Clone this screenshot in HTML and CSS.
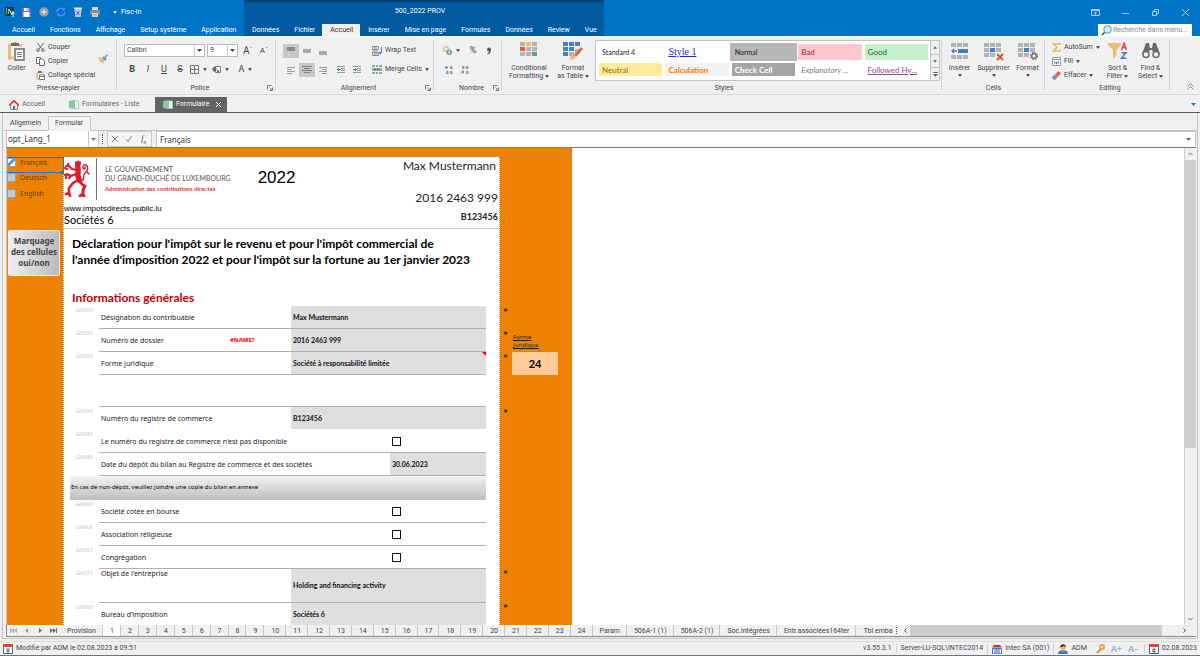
FILE: index.html
```html
<!DOCTYPE html>
<html lang="fr">
<head>
<meta charset="utf-8">
<title>500_2022 PROV - Fisc-in</title>
<link rel="stylesheet" href="styles.css">
</head>
<body>
<svg class="sprite" aria-hidden="true">
  <symbol id="tri" viewBox="0 0 5 3"><path d="M0 0h5L2.500 3z"/></symbol>
  <symbol id="cal" viewBox="0 0 10 10"><path d="M.5 1.500h9v8h-9z" fill="#fff" stroke="#4c5a78"/><path d="M0 0h10v3H0z" fill="#e2403c"/><path d="M4 5h2v3H4z" fill="none" stroke="#333" stroke-width=".8"/></symbol>
  <symbol id="sheet" viewBox="0 0 10 9"><path d="M4 1h5.500v7.500H4z" fill="#f4faf5" stroke="#a9cdb4"/><path d="M0 1l6-1v9L0 8z" fill="#8ec4a0"/></symbol>
  <symbol id="launch" viewBox="0 0 6 6"><path d="M.5 4.500v-4h4M2.500 2.500l2.500 2.500M5.500 2.500v3h-3" fill="none" stroke="#777"/></symbol>
</svg>
<div class="app">
<header class="top">
  <div class="top-left">
    <div class="quick">
      <button aria-label="Application"><svg width="10" height="10" viewBox="0 0 10 10"><path d="M0 0h9v9H0z" fill="#21384f"/><path d="M1.500 1v6M3.500 2v5" stroke="#5fbf6a"/><path d="M4 2l3 6M8 4v6M6.500 6h3" stroke="#fff"/></svg></button>
      <button aria-label="Enregistrer"><svg width="9" height="9" viewBox="0 0 9 9"><path d="M0 0h7.500L9 1.500V9H0z" fill="#8a5fc0"/><path d="M2 0h4.500v3H2zM1.500 4h6v5h-6z" fill="#fff"/><path d="M4.500.5h1v2h-1z" fill="#6a5fc0"/></svg></button>
      <button aria-label="Ajouter"><svg width="10" height="10" viewBox="0 0 10 10"><circle cx="5" cy="5" r="4.700" fill="#9a9a9a"/><path d="M5 2.500v5M2.500 5h5" stroke="#ddd" stroke-width="1.400"/></svg></button>
      <button aria-label="Actualiser"><svg width="10" height="10" viewBox="0 0 10 10"><path d="M1 5a4 4 0 0 1 7-2.500M9 5a4 4 0 0 1-7 2.500" fill="none" stroke="#4f8fe8" stroke-width="1.400"/><path d="M8.800.8v2.700H6zM1.200 9.200V6.500H4z" fill="#4f8fe8"/></svg></button>
      <button aria-label="Supprimer"><svg width="8" height="10" viewBox="0 0 8 10"><path d="M.5 2h7l-.7 8H1.200z" fill="#b9c8f0"/><path d="M0 .5h8v1.500H0z" fill="#e8ecfa"/><path d="M2.500 4l3 4M5.500 4l-3 4" stroke="#4a64c8"/></svg></button>
      <button aria-label="Imprimer"><svg width="10" height="10" viewBox="0 0 10 10"><path d="M2 0h6v3H2z" fill="#d8d8d8"/><path d="M0 3h10v4.500H0z" fill="#8b8b8b"/><path d="M2 6h6v4H2z" fill="#e4dcd2"/><path d="M3 7.500h4M3 9h4" stroke="#888" stroke-width=".6"/></svg></button>
      <span class="quick-more"><svg width="4" height="3" fill="#fff"><use href="#tri"/></svg></span>
      <span class="app-name">Fisc-in</span>
    </div>
    <nav class="tabs">
      <button>Accueil</button><button>Fonctions</button><button>Affichage</button><button>Setup système</button><button>Application</button>
    </nav>
  </div>
  <div class="top-mid">
    <h1 class="doc-title">500_2022 PROV</h1>
    <nav class="tabs">
      <button>Données</button><button>Fichier</button><button class="on">Accueil</button><button>Insérer</button><button>Mise en page</button><button>Formules</button><button>Données</button><button>Review</button><button>Vue</button>
    </nav>
  </div>
  <div class="top-right">
    <div class="win">
      <button aria-label="Options du ruban"><svg width="9" height="7" fill="none" stroke="#a9cdec"><path d="M.5.5h8v6h-8zM.5 1.500h8M4.500 6V3M3 4.500L4.500 3 6 4.500"/></svg></button>
      <button aria-label="Réduire"><svg width="7" height="7" stroke="#a9cdec"><path d="M0 4.500h7"/></svg></button>
      <button aria-label="Restaurer"><svg width="7" height="7" fill="none" stroke="#a9cdec"><path d="M.5 2.500h4v4h-4zM2.500 2V.5h4v4H5"/></svg></button>
      <button aria-label="Fermer"><svg width="7" height="7" stroke="#a9cdec"><path d="M0 0l7 7M7 0L0 7"/></svg></button>
    </div>
    <label class="search">
      <svg width="11" height="11" viewBox="0 0 11 11"><path d="M4 7L.8 10.200" stroke="#444" stroke-width="1.500"/><circle cx="6.500" cy="4.500" r="3.800" fill="#cdeafa" stroke="#4d93c4"/></svg>
      <input type="text" aria-label="Recherche" placeholder="Recherche dans menu...">
    </label>
  </div>
</header>

<section class="ribbon">
  <div class="group g-clip">
    <div class="group-body">
      <button class="big"><svg width="17" height="19" viewBox="0 0 17 19"><path d="M1.500 2v14h4M12.500 2v3" fill="none" stroke="#e9bd76" stroke-width="3"/><path d="M3 1h2.500a1.800 1.800 0 0 1 3 0H11v3H3z" fill="#6b6b6b"/><path d="M7 7h9v11H7z" fill="#fff" stroke="#6b6b6b" stroke-width="1.500"/><path d="M9 10.500h5M9 12.500h5M9 14.500h5" stroke="#777"/></svg>Coller</button>
      <div class="stack">
        <button class="item"><svg width="9" height="9" viewBox="0 0 9 9" fill="none" stroke="#6b6b6b"><path d="M1.500 0l4.500 6M7.500 0L3 6"/><circle cx="2" cy="7.200" r="1.300"/><circle cx="7" cy="7.200" r="1.300"/></svg>Couper</button>
        <button class="item"><svg width="9" height="9" viewBox="0 0 9 9" fill="#fff" stroke="#6b6b6b"><path d="M.5.500h4v6h-4z"/><path d="M3.500 2h3l2 2v4.500h-5z"/></svg>Copier</button>
        <button class="item"><svg width="9" height="9" viewBox="0 0 9 9"><path d="M1 1v7h2M6.500 1v2" fill="none" stroke="#e9bd76" stroke-width="1.600"/><path d="M2 0h3.500v2H2z" fill="#6b6b6b"/><path d="M3.500 4h5v4.500h-5z" fill="#fff" stroke="#777"/><path d="M4 5h4v1H4z" fill="#4a90d9"/></svg>Collage spécial</button>
      </div>
      <button class="brush" aria-label="Reproduire la mise en forme"><svg width="10" height="10" viewBox="0 0 10 10"><path d="M0 3l5 1 2 3-3 2.500C2 8 1 6 0 3z" fill="#e9bd76"/><path d="M5 3l3 3" stroke="#4a90d9" stroke-width="2"/><path d="M6.500 4L9.500.5" stroke="#8a8a8a" stroke-width="1.500"/></svg></button>
    </div>
    <h2>Presse-papier</h2>
  </div>

  <div class="group g-font">
    <div class="group-body two">
      <div class="line">
        <span class="combo w-font"><select aria-label="Police"><option>Calibri</option></select><svg width="5" height="3"><use href="#tri"/></svg></span>
        <span class="combo w-size"><select aria-label="Taille"><option>9</option></select><svg width="5" height="3"><use href="#tri"/></svg></span>
        <button class="ic grow">A<sup>ˆ</sup></button><button class="ic shrink">A<sup>ˇ</sup></button>
      </div>
      <div class="line">
        <button class="ic glyph b">B</button><button class="ic glyph i">I</button><button class="ic glyph u">U</button><button class="ic glyph s">S</button>
        <button class="ic drop" aria-label="Bordures"><svg width="9" height="9" fill="none" stroke="#777"><path d="M.5.500h8v8h-8zM4.500.500v8M.5 4.500h8"/></svg><svg class="ar" width="4" height="3"><use href="#tri"/></svg></button>
        <button class="ic drop wide" aria-label="Remplissage"><svg width="9" height="9" viewBox="0 0 9 9"><path d="M3.500 1.500h5v6h-5z" fill="#fff" stroke="#777"/><path d="M0 4l3-3 2 3-3 3z" fill="#6b6b6b"/><path d="M5 5h2v2H5z" fill="#6b6b6b"/></svg><svg class="ar" width="4" height="3"><use href="#tri"/></svg></button>
        <button class="ic drop wide glyph" aria-label="Couleur">A<svg class="ar" width="4" height="3"><use href="#tri"/></svg></button>
      </div>
    </div>
    <h2>Police</h2><svg class="launch" width="6" height="6"><use href="#launch"/></svg>
  </div>

  <div class="group g-align">
    <div class="group-body two">
      <div class="line">
        <button class="ic sel" aria-label="Haut"><svg width="8" height="8"><path d="M0 0h8v4H0z" fill="#8a8a8a"/></svg></button>
        <button class="ic" aria-label="Milieu"><svg width="8" height="8"><path d="M0 2h8v4H0z" fill="#aaa"/></svg></button>
        <button class="ic" aria-label="Bas"><svg width="8" height="8"><path d="M0 4h8v4H0z" fill="#aaa"/></svg></button>
        <button class="item push"><svg width="10" height="10" viewBox="0 0 10 10" fill="none"><path d="M.5.500h6v3h-6zM.5 6.500h6v3h-6zM0 5h6M2 2h3M2 8h3" stroke="#8a8a8a"/><path d="M9.500 1v6h-2M8.500 5.500L7.500 7l1 1.500" stroke="#4a80c0"/></svg>Wrap Text</button>
      </div>
      <div class="line">
        <button class="ic" aria-label="Gauche"><svg width="8" height="8" stroke="#999"><path d="M0 1.500h8M0 3.500h5M0 5.500h8M0 7.500h5"/></svg></button>
        <button class="ic sel" aria-label="Centrer"><svg width="10" height="8" stroke="#808080"><path d="M0 .5h10M2 2.500h6M0 4.500h10M2 6.500h6"/></svg></button>
        <button class="ic" aria-label="Droite"><svg width="8" height="8" stroke="#999"><path d="M0 1.500h8M3 3.500h5M0 5.500h8M3 7.500h5"/></svg></button>
        <button class="ic off" aria-label="Diminuer le retrait"><svg width="8" height="8"><path d="M0 .5h8M4 2.500h4M4 4.500h4M0 6.500h8" stroke="#999"/><path d="M0 3.500h4M2 2L.500 3.500 2 5" fill="none" stroke="#4a80c0"/></svg></button>
        <button class="ic" aria-label="Augmenter le retrait"><svg width="8" height="8"><path d="M0 .5h8M4 2.500h4M4 4.500h4M0 6.500h8" stroke="#999"/><path d="M0 3.500h4M2 2l1.500 1.500L2 5" fill="none" stroke="#4a80c0"/></svg></button>
        <button class="item merge"><svg width="10" height="9"><path d="M0 0h10v9H0z" fill="#8fae9d"/><path d="M0 2.500h10M0 6.500h10M3.500 0v2M6.500 0v2M3.500 7v2M6.500 7v2" stroke="#f0f0f0"/><path d="M2 4.500h6" stroke="#3d7d5f" stroke-dasharray="2 1"/></svg>Merge Cells<svg class="ar" width="4" height="3"><use href="#tri"/></svg></button>
      </div>
    </div>
    <h2>Alignement</h2><svg class="launch" width="6" height="6"><use href="#launch"/></svg>
  </div>

  <div class="group g-num">
    <div class="group-body two">
      <div class="line">
        <button class="ic drop" aria-label="Devise"><svg width="9" height="9" viewBox="0 0 9 9"><circle cx="3" cy="3" r="2.300" fill="none" stroke="#e9b25e" stroke-width="1.300"/><circle cx="6.200" cy="6.200" r="2.700" fill="#5fa287"/><path d="M6.200 4.500v3.400" stroke="#fff"/></svg><svg class="ar" width="4" height="3"><use href="#tri"/></svg></button>
        <button class="ic glyph pct">%</button><button class="ic" aria-label="Milliers"><svg width="6" height="8"><circle cx="3" cy="2.500" r="2" fill="#555"/><path d="M4.300 2.500C4.300 5 3 6.500 1.500 7" fill="none" stroke="#555" stroke-width="1.300"/></svg></button>
      </div>
      <div class="line">
        <button class="ic" aria-label="Ajouter une décimale"><svg width="8" height="8"><path d="M0 1.500h3M1.500 0L0 1.500 1.500 3" fill="none" stroke="#4a80c0"/><path d="M5.500.500h1.500v2H5.500zM1.500 5.500H3v2H1.500zM5.500 5.500h1.500v2H5.500z" fill="none" stroke="#888"/></svg></button>
        <button class="ic" aria-label="Réduire les décimales"><svg width="8" height="8"><path d="M0 6h3M1.500 4.500L3 6 1.500 7.500" fill="none" stroke="#4a80c0"/><path d="M1.500.500H3v2H1.500zM5.500.500h1.500v2H5.500zM5.500 5.500h1.500v2H5.500z" fill="none" stroke="#888"/></svg></button>
      </div>
    </div>
    <h2>Nombre</h2><svg class="launch" width="6" height="6"><use href="#launch"/></svg>
  </div>

  <div class="group g-style">
    <div class="group-body">
      <button class="big wide-a"><svg width="18" height="16"><path d="M0 0h5v4H0zM6 0h5v4H6zM12 0h5v4h-5zM0 5h5v4H0zM6 5h5v4H6zM12 5h5v4h-5zM0 10h5v4H0zM6 10h5v4H6zM12 10h5v4h-5z" fill="#b3b3b3"/><path d="M6 0h5v4H6z" fill="#e9c070"/><path d="M0 5h5v4H0z" fill="#d9603f"/><path d="M12 10h5v4h-5z" fill="#5fa287"/></svg><span>Conditional<br>Formatting <svg class="ar" width="4" height="3"><use href="#tri"/></svg></span></button>
      <button class="big wide-b"><svg width="20" height="19"><path d="M0 0h5v4H0zM6 0h5v4H6zM12 0h5v4h-5zM0 5h5v4H0zM6 5h5v4H6zM0 10h5v4H0z" fill="#4480bd"/><path d="M6 10h5v4H6zM12 7h5v5h-5z" fill="#b3b3b3"/><path d="M11 13l7-8 2 2-7 8z" fill="#e0623e"/><path d="M6 18l2-4 3-1 2 2-2 2z" fill="#e9bd76"/></svg><span>Format<br>as Table <svg class="ar" width="4" height="3"><use href="#tri"/></svg></span></button>
      <div class="gallery">
        <div class="swatches">
          <button class="sw st4">Standard 4</button><button class="sw st1">Style 1</button><button class="sw norm">Normal</button><button class="sw bad">Bad</button><button class="sw good">Good</button>
          <button class="sw neu">Neutral</button><button class="sw calc">Calculation</button><button class="sw check">Check Cell</button><button class="sw expl">Explanatory ...</button><button class="sw foll">Followed Hy...</button>
        </div>
        <div class="spin">
          <button aria-label="Haut"><svg width="4" height="3" viewBox="0 0 5 3"><path d="M0 3h5L2.500 0z"/></svg></button>
          <button aria-label="Bas"><svg width="4" height="3"><use href="#tri"/></svg></button>
          <button aria-label="Plus"><svg width="5" height="5"><path d="M0 .5h5" stroke="#666"/><path d="M0 2h5L2.500 5z"/></svg></button>
        </div>
      </div>
    </div>
    <h2>Styles</h2>
  </div>

  <div class="group g-cells">
    <div class="group-body">
      <button class="big"><svg width="18" height="18"><path d="M0 1h5v4H0zM6 1h5v4H6zM12 1h5v4h-5zM0 13h5v4H0zM6 13h5v4H6zM12 13h5v4h-5z" fill="#b3b3b3"/><path d="M7 7h10v4H7z" fill="#4480bd"/><path d="M1 9h5M3 7L1 9l2 2" fill="none" stroke="#4480bd" stroke-width="1.500"/></svg><span>Insérer</span><svg class="ar" width="4" height="3"><use href="#tri"/></svg></button>
      <button class="big"><svg width="20" height="18"><path d="M0 1h5v4H0zM6 1h5v4H6zM12 1h5v4h-5zM0 6h5v4H0zM12 6h5v4h-5zM0 11h5v4H0zM6 11h5v4H6z" fill="#b3b3b3"/><path d="M6 6h5v4H6z" fill="#4480bd"/><path d="M13 12l6 6M19 12l-6 6" stroke="#e0503a" stroke-width="2"/></svg><span>Supprimer</span><svg class="ar" width="4" height="3"><use href="#tri"/></svg></button>
      <button class="big"><svg width="20" height="18"><path d="M0 1h5v4H0zM6 1h5v4H6zM12 1h5v4h-5zM0 6h5v4H0zM12 6h5v4h-5zM0 11h5v4H0zM6 11h5v4H6z" fill="#b3b3b3"/><path d="M6 6h5v4H6z" fill="#4480bd"/><circle cx="16" cy="14" r="3.300" fill="#f0f0f0"/><circle cx="16" cy="14" r="2.300" fill="none" stroke="#666" stroke-width="1.300"/><circle cx="16" cy="14" r="3.400" fill="none" stroke="#666" stroke-width="1.200" stroke-dasharray="1.500 1.200"/></svg><span>Format</span><svg class="ar" width="4" height="3"><use href="#tri"/></svg></button>
    </div>
    <h2>Cells</h2>
  </div>

  <div class="group g-edit">
    <div class="group-body">
      <div class="stack">
        <button class="item"><svg width="9" height="9" fill="none" stroke="#e5b565" stroke-width="1.500"><path d="M8 2V1H1.500L5 4.500 1.500 8H8V7"/></svg>AutoSum <svg class="ar" width="4" height="3"><use href="#tri"/></svg></button>
        <button class="item"><svg width="9" height="9"><path d="M.5.500h8v8h-8zM.5 2.500h8" fill="#fff" stroke="#8c9bab"/><path d="M2 4h1v3H2zM6 4h1v3H6z" fill="#9aa"/><path d="M3 5h3L4.500 7.500z" fill="#2f6fb5"/></svg>Fill <svg class="ar" width="4" height="3"><use href="#tri"/></svg></button>
        <button class="item"><svg width="9" height="9"><path d="M3 3.500L6.500 0 9 2.500 5.500 6z" fill="#e0623e"/><path d="M0 6l3-2.500L5.500 6 3 9H2L0 7z" fill="#7d8fae"/></svg>Effacer <svg class="ar" width="4" height="3"><use href="#tri"/></svg></button>
      </div>
      <button class="big"><svg width="20" height="18"><path d="M0 1h13v2L8.500 8v6L5 17V8L0 3z" fill="#e9bd76"/><path d="M13.500 8L16 1l2.500 7M14.500 5.500h3" fill="none" stroke="#d9503a" stroke-width="1.500"/><path d="M13.500 10.700h4.500l-4.500 5.600h5" fill="none" stroke="#3f78b8" stroke-width="1.500"/></svg><span>Sort &amp;<br>Filter <svg class="ar" width="4" height="3"><use href="#tri"/></svg></span></button>
      <button class="big"><svg width="18" height="18"><path d="M4 1h3l1 5h2l1-5h3l4 11h-6l-2-4H8l-2 4H0z" fill="#6b6b6b"/><circle cx="4" cy="12.500" r="3" fill="#f0f0f0" stroke="#6b6b6b" stroke-width="1.500"/><circle cx="14" cy="12.500" r="3" fill="#f0f0f0" stroke="#6b6b6b" stroke-width="1.500"/></svg><span>Find &amp;<br>Select <svg class="ar" width="4" height="3"><use href="#tri"/></svg></span></button>
    </div>
    <h2>Editing</h2>
  </div>
  <button class="collapse" aria-label="Réduire le ruban"><svg width="7" height="7" fill="none" stroke="#888"><path d="M.5 3.500l3-3 3 3M.5 6.500l3-3 3 3"/></svg></button>
</section>

<nav class="docs">
  <button class="doc d1"><svg width="10" height="10" viewBox="0 0 10 10"><path d="M1.500 5v4.500h7V5" fill="#f3ead9" stroke="#8a8a8a"/><path d="M0 5.500L5 .8l5 4.700" fill="none" stroke="#d8322c" stroke-width="1.600"/><path d="M4 6h2v3.500H4z" fill="#3a6fc0"/></svg>Accueil</button>
  <button class="doc d2"><svg width="10" height="9"><use href="#sheet"/></svg>Formulaires - Liste</button>
  <button class="doc d3"><svg width="10" height="9"><use href="#sheet"/></svg>Formulaire<svg class="x" width="5" height="5" stroke="#fff"><path d="M0 0l5 5M5 0L0 5"/></svg></button>
  <svg class="docs-more" width="5" height="3" fill="#1a6fc0"><use href="#tri"/></svg>
</nav>

<main class="frame">
  <nav class="subtabs"><button>Allgemein</button><button class="on">Formular</button></nav>
  <div class="fbar">
    <div class="namebox"><input aria-label="Zone de nom" value="opt_Lang_1"><button aria-label="Liste"><svg width="5" height="3"><use href="#tri"/></svg></button></div>
    <span class="dots"></span>
    <div class="fx"><button aria-label="Annuler"><svg width="6" height="6" stroke="#888"><path d="M0 0l6 6M6 0L0 6"/></svg></button><button aria-label="Valider"><svg width="6" height="6" fill="none" stroke="#888"><path d="M0 3l2 2.500L5.500 0"/></svg></button><button class="f">f<sub>x</sub></button></div>
    <div class="formula"><input aria-label="Formule" value="Français"><svg width="5" height="3"><use href="#tri"/></svg></div>
  </div>
  <div class="work">
    <div class="view">
      <div class="strip"></div>
      <aside class="lang">
        <label class="opt cur"><input type="checkbox" checked>Français</label>
        <label class="opt"><input type="checkbox">Deutsch</label>
        <label class="opt"><input type="checkbox">English</label>
        <button class="mark">Marquage des cellules oui/non</button>
      </aside>
      <article class="page">
        <div class="head">
          <div class="brand">
            <svg class="lion" width="26" height="37" viewBox="0 0 26 37"><g fill="none" stroke="#d81f2a" stroke-linecap="round" stroke-linejoin="round"><path d="M14 4c-1 4 1 6 0 9s1 4 1 7" stroke-width="5.500"/><path d="M12 10L8 9 5 6 2 6M3 9L1 8M5 6L4 4M12 14l-5 2-4-2-2 1M3 14l-1 4M7 16l-2 2" stroke-width="2.200"/><path d="M14 20l-5 3-4 5 0 5-3 1M5 33l1 3" stroke-width="2.600"/><path d="M15 21l4 4 2 1-2 4 0 4-3 2M19 34l1 2" stroke-width="3"/><path d="M17 21c5-1 1-5 4-8 4-3 3-7 1-8-3-1-4 3-2 4 2 0 1-2 1-2M23 12l2 2" stroke-width="1.400"/></g><path d="M11 2l1-1 1 1 1.500-2 1 2L17 1v3h-6z" fill="#d81f2a"/></svg>
            <div class="brand-text"><span>LE GOUVERNEMENT</span><span>DU GRAND-DUCHÉ DE LUXEMBOURG</span><em>Administration des contributions directes</em></div>
            <strong class="year">2022</strong>
          </div>
          <div class="who"><span class="n1">Max Mustermann</span><span class="n2">2016 2463 999</span><b>B123456</b></div>
          <div class="office"><span>www.impotsdirects.public.lu</span><span class="soc">Sociétés 6</span></div>
        </div>
        <h2 class="title">Déclaration pour l'impôt sur le revenu et pour l'impôt commercial de<br>l'année d'imposition 2022 et pour l'impôt sur la fortune au 1er janvier 2023</h2>
        <h3 class="section">Informations générales</h3>
        <div class="form">
          <div class="row"><i>G0010</i><div class="cell"><label for="f10">Désignation du contribuable</label><input class="val" id="f10" value="Max Mustermann"></div></div>
          <div class="row"><i>G0020</i><div class="cell"><label for="f20">Numéro de dossier</label><span class="err">#NAME?</span><input class="val" id="f20" value="2016 2463 999"></div></div>
          <div class="row note"><i>G0050</i><div class="cell"><label for="f50">Forme juridique</label><input class="val" id="f50" value="Société à responsabilité limitée"></div></div>
          <div class="row gap"><i></i><div class="cell"></div></div>
          <div class="row open"><i>G0030</i><div class="cell"><label for="f30">Numéro du registre de commerce</label><input class="val" id="f30" value="B123456"></div></div>
          <div class="row"><i>G0040</i><div class="cell"><label for="f40">Le numéro du registre de commerce n'est pas disponible</label><input class="tick" type="checkbox" id="f40"></div></div>
          <div class="row"><i>G0045</i><div class="cell"><label for="f45">Date du dépôt du bilan au Registre de commerce et des sociétés</label><input class="val date" id="f45" value="30.06.2023"></div></div>
          <p class="banner">En cas de non-dépôt, veuillez joindre une copie du bilan en annexe</p>
          <div class="row"><i>G0060</i><div class="cell"><label for="f60">Société cotée en bourse</label><input class="tick" type="checkbox" id="f60"></div></div>
          <div class="row"><i>G0066</i><div class="cell"><label for="f66">Association réligieuse</label><input class="tick" type="checkbox" id="f66"></div></div>
          <div class="row"><i>G0067</i><div class="cell"><label for="f67">Congrégation</label><input class="tick" type="checkbox" id="f67"></div></div>
          <div class="row tall"><i>G0070</i><div class="cell"><label for="f70">Objet de l'entreprise</label><input class="val" id="f70" value="Holding and financing activity"></div></div>
          <div class="row"><i>G0080</i><div class="cell"><label for="f80">Bureau d'imposition</label><input class="val" id="f80" value="Sociétés 6"></div></div>
        </div>
      </article>
      <aside class="side">
        <div class="row">*</div>
        <div class="row">*<a href="#forme">Forme juridique</a></div>
        <div class="row">*<output id="forme">24</output></div>
        <div class="row gap"></div>
        <div class="row">*</div>
        <div class="row"></div><div class="row"></div><div class="row"></div><div class="row"></div><div class="row"></div><div class="row"></div>
        <div class="row tall">*</div>
        <div class="row">*</div>
      </aside>
    </div>
    <div class="vbar"><button aria-label="Monter"><svg width="5" height="4" fill="none" stroke="#777"><path d="M.5 3l2-2 2 2"/></svg></button><span></span><button class="down" aria-label="Descendre"><svg width="5" height="4" fill="none" stroke="#555"><path d="M.5 1l2 2 2-2"/></svg></button></div>
  </div>
  <div class="sheets">
    <div class="nav">
      <button aria-label="Première"><svg width="7" height="5" fill="#aaa"><path d="M0 0h1v5H0zM4 0v5L1 2.500zM7 0v5L4 2.500z"/></svg></button>
      <button aria-label="Précédente"><svg width="3" height="5" fill="#999"><path d="M3 0v5L0 2.500z"/></svg></button>
      <button aria-label="Suivante"><svg width="3" height="5" fill="#666"><path d="M0 0v5l3-2.500z"/></svg></button>
      <button aria-label="Dernière"><svg width="7" height="5" fill="#666"><path d="M0 0v5l3-2.500zM3 0v5l3-2.500zM6 0h1v5H6z"/></svg></button>
    </div>
    <button>Provision</button><button class="on">1</button><button>2</button><button>3</button><button>4</button><button>5</button><button>6</button><button>7</button><button>8</button><button>9</button><button>10</button><button>11</button><button>12</button><button>13</button><button>14</button><button>15</button><button>16</button><button>17</button><button>18</button><button>19</button><button>20</button><button>21</button><button>22</button><button>23</button><button>24</button><button>Param</button><button>506A-1 (1)</button><button>506A-2 (1)</button><button>Soc.intégrées</button><button>Entr.associées164ter</button><button class="cut">Tbl emba</button>
    <span class="dots"></span>
    <div class="hbar"><button aria-label="Gauche"><svg width="4" height="5" fill="none" stroke="#444"><path d="M3.500.500l-2 2 2 2"/></svg></button><span></span><button class="end" aria-label="Droite"><svg width="4" height="5" fill="none" stroke="#444"><path d="M.5.500l2 2-2 2"/></svg></button></div>
  </div>
</main>

<footer class="status">
  <span class="mod"><svg width="10" height="10"><use href="#cal"/></svg>Modifié par ADM le 02.08.2023 à 09:51</span>
  <span>v3.55.3.1</span>
  <span class="sep">Server-LU-SQL\INTEC2014</span>
  <span class="sep"><svg width="10" height="10"><path d="M.5 4.500h9V10h-9z" fill="#e8f0fa" stroke="#3a6fc0"/><path d="M3 5v5M5 5v5M7 5v5" stroke="#3a6fc0"/><path d="M0 3.500L2 1h6l2 2.500z" fill="#d8322c"/></svg>Intec SA (001)</span>
  <span class="sep"><svg width="10" height="10"><path d="M0 10l1-3 4-1 4 1 1 3z" fill="#3a78c8"/><path d="M4 6h2l-1 3z" fill="#e89a3c"/><circle cx="5" cy="3.500" r="2.500" fill="#f0b070"/><path d="M2 3.500C2-1 8-1 8 3.500L6 2z" fill="#5a2d14"/></svg>ADM</span>
  <span class="tools"><svg width="9" height="10"><path d="M5 5L1 9" stroke="#d89030" stroke-width="2"/><circle cx="6" cy="3" r="2.300" fill="#f7d58a" stroke="#e0a040" stroke-width="1.400"/></svg><b>A+</b><b>A–</b></span>
  <span class="sep"><svg width="10" height="10"><use href="#cal"/></svg>02.08.2023</span>
</footer>
</div>
</body>
</html>
```
FILE: styles.css
```css
* { box-sizing: border-box; }
body { margin: 0; font: 7px/9px Roboto, "Open Sans", sans-serif; color: #444; background: #f0f0f0; }
button, input, select { font: inherit; color: inherit; margin: 0; padding: 0; border: 0; background: none; border-radius: 0; white-space: nowrap; }
input, select { min-width: 0; outline: 0; }
h1, h2, h3, p { margin: 0; font: inherit; }
svg { flex: none; display: block; }
.sprite { position: absolute; width: 0; height: 0; }
.ar { fill: #333; display: inline-block; vertical-align: middle; }
.app { height: 100vh; display: flex; flex-direction: column; overflow: hidden; border-bottom: 1px solid #6b7680; }

.top { display: grid; grid-template-columns: 244px 360px 1fr; background: #0173c7; color: #fff; flex: none; }
.top > div { display: grid; grid-template-rows: 24px 12px; }
.quick { display: flex; align-items: center; padding-left: 1px; }
.quick button { width: 17px; display: flex; justify-content: center; }
.quick-more { padding: 0 4px 0 10px; }
.tabs { display: flex; }
.tabs button { padding: 0 7px 0 8px; line-height: 12px; }
.top-left .tabs { padding-left: 4px; }
.top-mid { background: #005a9f; border-top: 2px solid #003f72; }
.top-mid.top-mid { grid-template-rows: 22px 12px; }
.top-mid .on { background: #f0f0f0; color: #333; }
.doc-title { text-align: center; line-height: 18px; padding-right: 8px; }
.top-right { justify-items: end; }
.win { display: flex; align-items: center; }
.win button { width: 30px; display: flex; justify-content: center; }
.search { display: flex; width: 94px; margin-right: 8px; background: #fff; align-items: center; padding-left: 3px; gap: 1px; }
.search input { flex: 1; }
.search input::placeholder { color: #888; }

.ribbon { display: flex; height: 59px; flex: none; border-top: 1px solid #fafafa; border-bottom: 1px solid #d9d9d9; }
.group { position: relative; display: grid; grid-template-rows: 1fr 10px; padding: 3px 0 1px; }
.group::after { content: ""; position: absolute; right: 0; top: 3px; bottom: 4px; border-right: 1px solid #d4d4d4; }
.group h2 { text-align: center; line-height: 10px; }
.launch { position: absolute; right: 3px; bottom: 3px; }
.g-clip { width: 117px; }
.g-font { width: 159px; padding-left: 7px; }
.g-align { width: 158px; padding-left: 7px; }
.g-num { width: 68px; padding-left: 7px; }
.g-style { flex: 1; min-width: 300px; padding-left: 4px; }
.g-cells { width: 103px; }
.g-edit { width: 125px; padding-left: 5px; }
.group-body { display: flex; min-width: 0; }
.two { display: grid; align-content: start; gap: 4px; padding-top: 3px; }
.line { display: flex; align-items: center; height: 15px; }
.big { display: flex; flex-direction: column; align-items: center; width: 33px; line-height: 8px; padding-top: 2px; flex: none; }
.big svg:first-child { height: 19px; margin-bottom: 3px; }
.g-cells .group-body { justify-content: center; gap: 1px; }
.big .ar { margin-top: 2px; }
.big span .ar { margin: 0; }
.stack { display: grid; grid-auto-rows: 14px; align-content: start; padding: 0 0 0 3px; width: 62px; }
.item { display: flex; align-items: center; gap: 3px; text-align: left; }
.brush { padding: 0 0 6px 3px; }
.combo { display: flex; align-items: center; background: #fff; border: 1px solid #b9b9b9; height: 13px; padding-right: 2px; fill: #444; margin-right: 2px; }
.combo select { appearance: none; flex: 1; padding-left: 2px; border-right: 1px solid #c9c9c9; margin-right: 2px; height: 11px; }
.w-font { width: 81px; }
.w-size { width: 31px; }
.ic { width: 16px; height: 14px; display: flex; align-items: center; justify-content: center; gap: 4px; flex: none; }
.grow { font-size: 10px; gap: 0; }
.shrink { font-size: 8px; gap: 0; }
.ic sup { font-size: 7px; color: #4a80c0; line-height: 4px; }
.glyph { font-size: 9px; }
.b { font-weight: bold; } .i { font-style: italic; } .u { text-decoration: underline; } .s { text-decoration: line-through; }
.drop { width: 20px; }
.wide { width: 25px; }
.pct { margin-left: 4px; }
.sel { background: #c8c8c8; }
.push { margin-left: 41px; }
.off { margin-left: 2px; }
.merge { margin-left: 7px; }
.wide-a { width: 46px; }
.wide-b { width: 42px; }
.gallery { flex: 1; display: flex; margin: 0 2px 0 1px; height: 41px; background: #fff; border: 1px solid #c3c3c3; font: 8px/12px Lato, "Open Sans", sans-serif; }
.swatches { flex: 1; display: grid; grid-template: 18px 15px / repeat(5, 1fr); gap: 1px 3px; padding: 2px 2px 0 3px; }
.sw { text-align: left; padding-left: 3px; overflow: hidden; margin: 1px 0; color: #222; }
.st4 { font-size: 7px; }
.st1 { font: 10px/12px "Liberation Serif", serif; color: #2020e0; text-decoration: underline; }
.norm { background: #b7b7b7; margin: 0 -2px; padding-left: 5px; font-size: 7px; }
.bad { background: #ffc7ce; color: #9c1c26; }
.good { background: #c6efce; color: #156a1c; }
.neu { background: #ffeb9c; color: #9c6a00; }
.calc { background: #f2f2f2; color: #fa7d00; font-weight: bold; }
.check { background: #a5a5a5; color: #fff; font-weight: bold; }
.expl { color: #7f7f7f; font-style: italic; }
.foll { color: #8a4a7a; text-decoration: underline; }
.spin { display: grid; grid-template-rows: 1fr 1fr 1fr; width: 9px; border-left: 1px solid #c3c3c3; background: #f0f0f0; }
.spin button { display: grid; place-items: center; border-top: 1px solid #c3c3c3; fill: #666; }
.spin button:first-child { border: 0; }
.g-edit .stack { width: 51px; padding-left: 2px; }
.collapse { width: 30px; padding: 0 6px 4px 17px; align-self: end; }

.docs { display: flex; flex: none; height: 18px; padding-top: 2px; border-bottom: 1px solid #5a5a5a; align-items: stretch; color: #666; }
.doc { display: flex; align-items: center; gap: 3px; }
.d1 { margin-left: 9px; width: 60px; }
.d2 { width: 86px; }
.d3 { background: #636363; color: #fff; padding: 0 6px 0 8px; }
.x { margin-left: 4px; }
.docs-more { margin: 6px 4px 0 auto; }

.frame { flex: 1; min-height: 0; display: flex; flex-direction: column; margin: 0 2px 2px; border: solid #c4c4c4; border-width: 0 1px 1px; padding: 3px 1px 1px 3px; }
.subtabs { display: flex; flex: none; height: 15px; border-bottom: 1px solid #c4c4c4; margin: 0 -1px 0 -3px; padding-left: 1px; }
.subtabs button { padding: 0 7px 0 6px; }
.subtabs .on { border: 1px solid #c4c4c4; border-bottom-color: #f0f0f0; margin-bottom: -1px; background: #f3f3f3; }
.fbar { display: flex; flex: none; height: 17px; border-bottom: 1px solid #777; border-left: 1px solid #c4c4c4; }
.namebox { display: flex; width: 92px; background: #fff; border-right: 1px solid #c4c4c4; }
.namebox input { flex: 1; font: 8px/12px "Noto Sans", sans-serif; padding-left: 1px; color: #333; }
.namebox button { width: 10px; border-left: 1px solid #c4c4c4; display: grid; place-items: center; fill: #777; }
.dots { width: 1px; margin: 3px 3px; border-left: 1px dotted #555; }
.fx { display: flex; width: 45px; margin-left: 1px; border: 1px solid #c9c9c9; background: #f4f4f4; }
.fx button { flex: 1; display: grid; place-items: center; }
.fx .f { display: block; font: italic 8px/12px "Liberation Serif", serif; }
.fx sub { font-size: 6px; line-height: 6px; }
.formula { flex: 1; display: flex; align-items: center; margin-left: 4px; padding: 0 4px 0 3px; background: #fff; border: 1px solid #c4c4c4; border-bottom: 0; fill: #666; }
.formula input { flex: 1; color: #333; font: 8px/12px "Noto Sans", sans-serif; }
.work { flex: 1; min-height: 0; display: flex; border-left: 1px solid #c4c4c4; }
.view { flex: 1; min-height: 0; overflow: hidden; background: #fff; display: grid; grid-template: 9px 1fr / 56px 437px 72px; }
.strip { grid-column: 1 / 4; background: #ee8100; border-bottom: 1px dotted #998; }
.lang { background: #ee8100; color: #5a4012; font: 7px/9px "Noto Sans", sans-serif; }
.opt { display: flex; align-items: center; height: 16px; gap: 4px; padding-bottom: 7px; position: relative; }
.opt input { appearance: none; width: 9px; height: 9px; background: #b9c8da; border: 1px solid #8fa0b4; }
.opt input:checked { background: linear-gradient(135deg, #fff 30%, #5f9ad0 32% 60%, #fff 62%); }
.cur { border: 1px solid #1f78c0; border-left: 0; margin-right: -1px; padding-bottom: 5px; }
.cur::after { content: ""; position: absolute; right: -1px; bottom: -2px; width: 3px; height: 3px; background: #1f78c0; }
.mark { display: block; width: 52px; height: 46px; margin: 25px 1px 0; padding: 0 2px 3px; white-space: normal; font: bold 8px/11px "Noto Sans", sans-serif; color: #444; background: linear-gradient(90deg, #eee, #bbb); border: 1px solid #eee; border-radius: 2px; }
.page { background: #fff; border: 1px dotted #999; border-width: 0 1px; color: #222; min-height: 0; }
.head { display: grid; grid-template: 48px 23px / 1fr auto; border-bottom: 1px solid #ccc; }
.brand { display: flex; }
.lion { margin: 3px 6px 0 0; }
.brand-text { display: grid; align-content: start; margin: 1px 0 5px; border-left: 1px solid #777; padding: 7px 0 0 8px; font: 7px/9px Lato, sans-serif; color: #555; }
.brand-text em { font: bold 6px/11px Lato, sans-serif; color: #d8323c; }
.year { font: 17px/42px "Liberation Sans", sans-serif; color: #000; margin-left: 27px; }
.who { grid-row: 1 / 3; grid-column: 2; display: grid; justify-items: end; align-content: start; padding-right: 1px; font: 12px/17px Lato, sans-serif; }
.n1 { padding-right: 2px; }
.n2 { padding-top: 15px; }
.who b { font-size: 9px; line-height: 21px; }
.office { display: grid; grid-template-rows: 8px 15px; font: 8px/8px "Liberation Sans", sans-serif; color: #000; }
.soc { font: 11px/14px Lato, sans-serif; }
.title { font: bold 12px/16px Lato, sans-serif; color: #000; margin: 7px 0 0 8px; white-space: nowrap; }
.section { font: bold 12px/14px Lato, sans-serif; color: #c00000; margin: 23px 0 0 8px; }
.form { margin: 1px 13px 0 6px; font-family: "Noto Sans", sans-serif; }
.row { display: flex; height: 23px; }
.row i { width: 29px; padding-left: 6px; font: 5px/8px "DejaVu Sans", sans-serif; color: #bbb; }
.cell { flex: 1; display: flex; align-items: center; border-bottom: 1px solid #b0b0b0; padding-left: 2px; position: relative; }
.open .cell { border-color: transparent; }
.gap { height: 32px; }
.tall { height: 34px; }
.tall .cell { align-items: start; }
.val { width: 195px; align-self: stretch; margin-left: auto; background: #dedede; padding-left: 2px; font: bold 7px/9px Lato, sans-serif; color: #111; }
.date { width: 96px; }
.err { margin-left: 66px; font: bold 6px/9px "Noto Sans", sans-serif; color: red; }
.note .cell::after { content: ""; position: absolute; right: 0; top: 0; border: 2px solid; border-color: red red transparent transparent; }
.tick { appearance: none; width: 9px; height: 9px; border: 1px solid #111; margin: 0 85px 0 auto; background: #fff; }
.banner { height: 24px; line-height: 22px; padding-left: 1px; font-size: 6px; color: #000; background: linear-gradient(#f4f4f4, #bdbdbd); }
.side { background: #ee8100; color: #222; padding-top: 149px; font: bold 12px/14px Lato, sans-serif; min-height: 0; overflow: hidden; }
.side .row { padding-left: 3px; }
.side a { font: 6px/8px "Noto Sans", sans-serif; color: #221; width: 30px; margin: 4px 0 0 5px; }
.side output { width: 46px; height: 23px; margin-left: 4px; background: #ffcc99; font: bold 11px/23px Lato, sans-serif; text-align: center; color: #000; }
.vbar { width: 12px; display: flex; flex-direction: column; background: #f0f0f0; border-left: 1px solid #d0d0d0; }
.vbar button { height: 12px; display: grid; place-items: center; }
.vbar span { height: 288px; background: #cdcdcd; }
.vbar .down { margin-top: auto; }
.sheets { display: flex; flex: none; height: 12px; border: solid #888; border-width: 0 0 1px 1px; }
.sheets > button { padding: 0 6px 0 7px; border-right: 1px solid #c4c4c4; line-height: 10px; flex: none; }
.sheets > .on { background: #fff; }
.sheets > .cut { border: 0; padding-right: 0; }
.nav { display: flex; width: 53px; }
.nav button { flex: 1; display: grid; place-items: center; }
.sheets .dots { margin: 2px 3px; }
.hbar { flex: 1; display: flex; }
.hbar span { flex: 1; background: #cdcdcd; }
.hbar button { width: 10px; display: grid; place-items: center; }
.hbar .end { width: 34px; padding-left: 12px; }
.status { display: flex; flex: none; height: 14px; align-items: center; padding: 0 3px; border-top: 1px solid #ddd; }
.status span { display: flex; align-items: center; gap: 3px; padding-right: 4px; }
.status .mod { margin-right: auto; }
.status .sep { border-left: 1px solid #d0d0d0; padding-left: 4px; }
.tools b { font: bold 9px/10px "Open Sans", sans-serif; color: #9db4cf; padding-left: 3px; }
.status .tools { padding: 0 5px 0 5px; }
.status .sep:last-child { padding-right: 0; }
```
